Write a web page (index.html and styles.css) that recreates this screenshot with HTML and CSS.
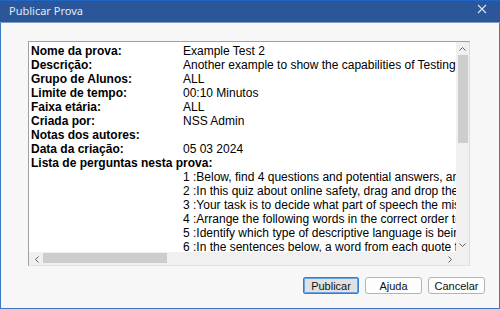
FILE: index.html
```html
<!DOCTYPE html>
<html lang="pt">
  <head>
    <meta charset="UTF-8" />
    <title>Publicar Prova</title>
    <link rel="stylesheet" href="styles.css">
  </head>
  <body>
    <div class="window">
      <div class="titlebar">
        <span class="title">Publicar Prova</span>
        <svg class="close" width="10" height="10" viewBox="0 0 10 10">
          <path d="M1 1 L9 9 M9 1 L1 9" stroke="#dbe3ef" stroke-width="1.1" fill="none" />
        </svg>
      </div>
      <div class="content">
        <div class="listbox">
          <div class="view">
            <div class="details">
              <b>Nome da prova:</b><span>Example Test 2</span>
              <b>Descrição:</b><span>Another example to show the capabilities of Testing and Quizzes</span>
              <b>Grupo de Alunos:</b><span>ALL</span>
              <b>Limite de tempo:</b><span>00:10 Minutos</span>
              <b>Faixa etária:</b><span>ALL</span>
              <b>Criada por:</b><span>NSS Admin</span>
              <b>Notas dos autores:</b><span></span>
              <b>Data da criação:</b><span>05 03 2024</span>
              <b class="wide">Lista de perguntas nesta prova:</b>
              <span class="item">1 :Below, find 4 questions and potential answers, and choose the correct answer for each one.</span>
              <span class="item">2 :In this quiz about online safety, drag and drop the right words into the gaps.</span>
              <span class="item">3 :Your task is to decide what part of speech the missing word in each sentence is.</span>
              <span class="item">4 :Arrange the following words in the correct order to make a sentence.</span>
              <span class="item">5 :Identify which type of descriptive language is being used in each sentence.</span>
              <span class="item">6 :In the sentences below, a word from each quote from the text has been removed.</span>
            </div>
          </div>
          <div class="vscroll">
            <svg class="arrow" width="7" height="4" viewBox="0 0 7 4"><path d="M0.5 3.5 L3.5 0.5 L6.5 3.5" stroke="#606060" fill="none" /></svg>
            <div class="vthumb"></div>
            <div class="vtrack"></div>
            <svg class="arrow" width="7" height="4" viewBox="0 0 7 4"><path d="M0.5 0.5 L3.5 3.5 L6.5 0.5" stroke="#606060" fill="none" /></svg>
          </div>
          <div class="hscroll">
            <svg class="arrow" width="4" height="7" viewBox="0 0 4 7"><path d="M3.5 0.5 L0.5 3.5 L3.5 6.5" stroke="#606060" fill="none" /></svg>
            <div class="hthumb"></div>
            <div class="htrack"></div>
            <svg class="arrow" width="4" height="7" viewBox="0 0 4 7"><path d="M0.5 0.5 L3.5 3.5 L0.5 6.5" stroke="#606060" fill="none" /></svg>
          </div>
          <div class="corner"></div>
        </div>
        <div class="buttons">
          <button class="btn default">Publicar</button>
          <button class="btn">Ajuda</button>
          <button class="btn">Cancelar</button>
        </div>
      </div>
    </div>
  </body>
</html>
```

FILE: styles.css
```css
html,
body {
  margin: 0;
  padding: 0;
}
body {
  width: 500px;
  height: 309px;
  overflow: hidden;
}
.window {
  width: 500px;
  height: 309px;
  box-sizing: border-box;
  border: 1px solid #3a78c8;
  border-top: 0;
  display: flex;
  flex-direction: column;
  background-color: #f7f7f7;
}
.titlebar {
  height: 23px;
  box-sizing: border-box;
  border-top: 1px solid #1f65c4;
  border-bottom: 1px solid #7f9cc4;
  background-color: #2b579a;
  display: flex;
  align-items: center;
  justify-content: space-between;
  padding: 0 13px 2px 9px;
  margin: 0 -1px;
}
.title {
  font-family: "Noto Sans", sans-serif;
  font-size: 11px;
  color: #e2e9f3;
}
.close {
  display: block;
  margin-top: -3px;
}
.content {
  flex: 1;
  display: flex;
  flex-direction: column;
  padding: 18px 29px 0 27px;
}
.listbox {
  height: 225px;
  box-sizing: border-box;
  border-top: 1px solid #a0a0a0;
  border-left: 1px solid #a0a0a0;
  border-right: 1px solid #dcdcdc;
  border-bottom: 1px solid #e2e2e2;
  background-color: #fff;
  display: grid;
  grid-template-columns: 1fr 13px;
  grid-template-rows: 1fr 13px;
}
.view {
  overflow: hidden;
  padding: 2px 0 0 2px;
}
.details {
  display: grid;
  grid-template-columns: 152px max-content;
  font-family: "Liberation Sans", Arial, sans-serif;
  font-size: 12px;
  line-height: 14px;
  color: #000;
  white-space: nowrap;
}
.details b {
  grid-column: 1;
}
.details .wide {
  grid-column: 1 / -1;
}
.details .item {
  grid-column: 2;
}
.vscroll {
  background-color: #f0f0f0;
  display: flex;
  flex-direction: column;
  align-items: center;
  padding: 5px 0 5px;
}
.vscroll .arrow {
  display: block;
  margin-left: -1px;
}
.vthumb {
  width: 10px;
  height: 88px;
  margin-top: 4px;
  background-color: #cdcdcd;
}
.vtrack {
  flex: 1;
}
.hscroll {
  background-color: #f0f0f0;
  display: flex;
  align-items: center;
  padding: 0 4px 0 6px;
}
.hscroll .arrow {
  display: block;
  margin-top: 1px;
}
.hthumb {
  width: 124px;
  height: 10px;
  margin-left: 4px;
  margin-top: -2px;
  background-color: #cdcdcd;
}
.htrack {
  flex: 1;
}
.corner {
  background-color: #f0f0f0;
}
.buttons {
  display: flex;
  justify-content: flex-end;
  gap: 6px;
  margin-top: 11px;
  margin-right: -15px;
}
.btn {
  width: 57px;
  height: 17px;
  box-sizing: border-box;
  padding: 0;
  border: 1px solid #b4b4b4;
  border-radius: 3px;
  background-color: #fdfdfd;
  font-family: "Liberation Sans", Arial, sans-serif;
  font-size: 11px;
  color: #111;
}
.btn.default {
  width: 56px;
  border: 1px solid #2f7fd6;
  border-radius: 2px;
  background-color: #e1e1e1;
  box-shadow: inset 0 0 0 1px #6aa3e0;
}
```
